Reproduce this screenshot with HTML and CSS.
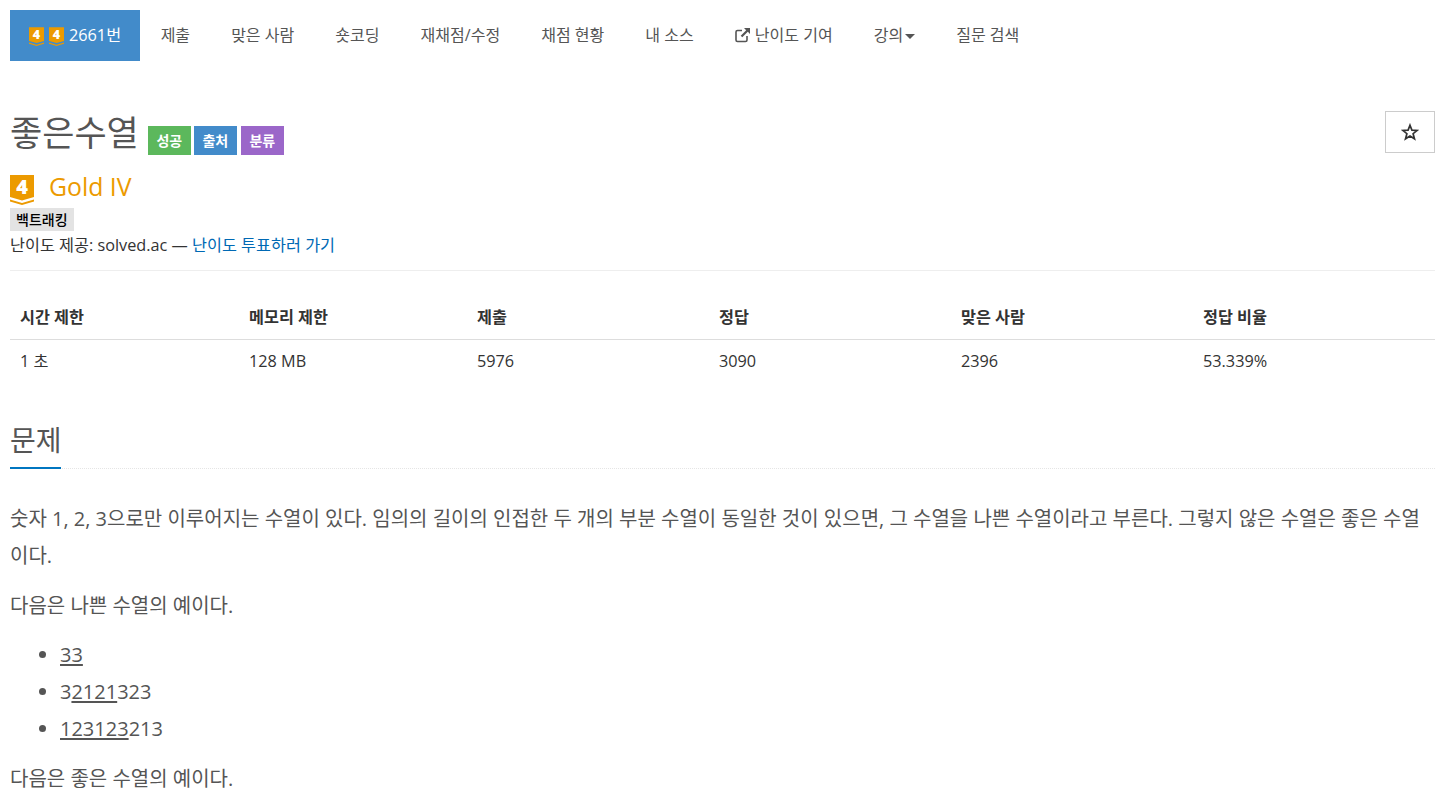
FILE: index.html
```html
<!DOCTYPE html>
<html lang="ko">
<head>
<meta charset="utf-8">
<title>좋은수열</title>
<link rel="stylesheet" href="styles.css">
</head>
<body>
<div class="page">
  <nav class="nav">
    <a class="nav-item active">
      <svg class="tier-small" viewBox="0 0 24 30"><path class="tier-fill" d="M0 0H24V22L12 25.500 0 22Z"/><path class="tier-fill" d="M0 24.500 12 28 24 24.500V26.500L12 30 0 26.500Z"/><text x="12" y="18.500" class="tier-num-big">4</text></svg>
      <svg class="tier-small" viewBox="0 0 24 30"><path class="tier-fill" d="M0 0H24V22L12 25.500 0 22Z"/><path class="tier-fill" d="M0 24.500 12 28 24 24.500V26.500L12 30 0 26.500Z"/><text x="12" y="18.500" class="tier-num-big">4</text></svg>
      <span>2661번</span>
    </a>
    <a class="nav-item">제출</a>
    <a class="nav-item">맞은 사람</a>
    <a class="nav-item">숏코딩</a>
    <a class="nav-item">재채점/수정</a>
    <a class="nav-item">채점 현황</a>
    <a class="nav-item">내 소스</a>
    <a class="nav-item"><svg class="ext-icon" viewBox="0 0 16 16"><path d="M12 9v4a1.500 1.500 0 0 1-1.500 1.500h-8A1.500 1.500 0 0 1 1 13V5a1.500 1.500 0 0 1 1.500-1.500H7" fill="none" stroke="currentColor" stroke-width="1.600"/><path d="M9 1h6v6l-2.200-2.200-5.500 5.500-1.600-1.600 5.500-5.500z" fill="currentColor"/></svg><span>난이도 기여</span></a>
    <a class="nav-item">강의<span class="caret"></span></a>
    <a class="nav-item">질문 검색</a>
  </nav>

  <header class="title-row">
    <div class="title-left">
      <h1 class="title">좋은수열</h1>
      <span class="label green">성공</span>
      <span class="label blue">출처</span>
      <span class="label purple">분류</span>
    </div>
    <button class="star-btn"><svg class="star" viewBox="0 0 18 18"><path d="M9 2.200 10.900 7.100 16.200 7.400 12.100 10.700 13.500 15.800 9 13 4.500 15.800 5.900 10.700 1.800 7.400 7.100 7.100Z" fill="none" stroke="#333" stroke-width="1.700"/></svg></button>
  </header>

  <div class="tier-row">
    <svg class="tier-big" viewBox="0 0 24 30"><path class="tier-fill" d="M0 0H24V22L12 25.500 0 22Z"/><path class="tier-fill" d="M0 24.500 12 28 24 24.500V26.500L12 30 0 26.500Z"/><text x="12" y="18.500" class="tier-num-big">4</text></svg>
    <span class="tier-name">Gold IV</span>
  </div>
  <div class="tag-row"><span class="tag">백트래킹</span></div>
  <p class="credit">난이도 제공: solved.ac — <a class="link">난이도 투표하러 가기</a></p>

  <table class="info">
    <thead>
      <tr><th class="c1">시간 제한</th><th class="c2">메모리 제한</th><th class="c3">제출</th><th class="c4">정답</th><th class="c5">맞은 사람</th><th class="c6">정답 비율</th></tr>
    </thead>
    <tbody>
      <tr><td>1 초</td><td>128 MB</td><td>5976</td><td>3090</td><td>2396</td><td>53.339%</td></tr>
    </tbody>
  </table>

  <section class="problem">
    <div class="headline"><h2>문제</h2></div>
    <p>숫자 1, 2, 3으로만 이루어지는 수열이 있다. 임의의 길이의 인접한 두 개의 부분 수열이 동일한 것이 있으면, 그 수열을 나쁜 수열이라고 부른다. 그렇지 않은 수열은 좋은 수열이다.</p>
    <p>다음은 나쁜 수열의 예이다.</p>
    <ul>
      <li><u>33</u></li>
      <li>3<u>2121</u>323</li>
      <li><u>123123</u>213</li>
    </ul>
    <p>다음은 좋은 수열의 예이다.</p>
  </section>
</div>
</body>
</html>
```
FILE: styles.css
```css
* { box-sizing: border-box; }
html, body { margin: 0; padding: 0; }
body {
  font-family: "Open Sans", "Noto Sans CJK KR", sans-serif;
  font-size: 16.250px;
  line-height: 20px;
  color: #333;
  background: #fff;
  overflow: hidden;
}
.page { width: 1445px; padding: 10px 10px 0; height: 795px; overflow: hidden; }

.nav { display: flex; height: 51px; }
.nav-item {
  display: flex; align-items: center;
  padding: 0 20.500px 2px;
  color: #555;
  font-size: 16.050px;
}
.nav-item.active {
  background: #428bca; color: #fff;
  padding: 0 19px 2px;
  font-size: 16.250px;
}
.tier-small { width: 15px; height: 19px; margin-right: 5px; margin-top: 4px; overflow: visible; }
.tier-fill { fill: #ec9a00; }
.tier-num-big { fill: #fff; font: 800 20px "Open Sans", sans-serif; text-anchor: middle; }
.ext-icon { width: 16px; height: 16px; margin-right: 4px; }
.caret {
  display: inline-block; width: 0; height: 0; margin-left: 2px; margin-top: 3px;
  border-top: 5px solid #555; border-left: 5.500px solid transparent; border-right: 5.500px solid transparent;
}

.title-row { display: flex; justify-content: space-between; align-items: flex-start; margin-top: 50px; height: 61px; width: 1425px; }
.title-left { display: flex; align-items: flex-start; height: 44px; }
.title { margin: 0 9px 0 0; font-size: 35px; font-weight: 400; line-height: 44px; color: #555; }
.label {
  height: 29px; width: 43px; margin-right: 3px; margin-top: 15px;
  display: flex; align-items: center; justify-content: center;
  color: #fff; font-size: 14px; font-weight: 700;
}
.green { background: #5cb85c; }
.blue { background: #428bca; }
.purple { background: #9b67c9; margin-left: 1px; }
.star-btn {
  width: 50px; height: 42px; background: #fff; border: 1px solid #ccc; padding: 0;
  display: flex; align-items: center; justify-content: center;
}
.star { width: 18px; height: 18px; }

.tier-row { display: flex; align-items: center; height: 30px; margin-top: 3px; }
.tier-big { width: 24px; height: 30px; overflow: visible; }
.tier-name { margin-left: 15px; padding-bottom: 8px; font-size: 24.800px; color: #ec9a00; }
.tag-row { height: 24px; margin-top: 3px; display: flex; align-items: flex-start; }
.tag { background: #e3e3e3; color: #000; padding: 0 6px; font-size: 14px; font-weight: 500; line-height: 23px; height: 23px; }
.credit { margin: -1px 0 0; height: 28px; line-height: 28px; }
.link { color: #0069b4; }

.info { width: 1425px; table-layout: fixed; border-collapse: collapse; border-top: 1px solid #eee; margin-top: 11px; }
.info th { height: 69px; padding: 24px 10px 0; text-align: left; font-weight: 700; color: #333; border-bottom: 1px solid #ddd; }
.info td { height: 42px; padding: 0 10px; color: #333; }
.c1 { width: 229px; } .c2 { width: 228px; } .c3 { width: 242px; } .c4 { width: 242px; } .c5 { width: 242px; } .c6 { width: 242px; }

.problem { width: 1425px; margin-top: 41px; }
.headline { border-bottom: 1px dotted #e5e5e5; height: 46px; }
.headline h2 {
  display: inline-block; margin: 0; height: 46px; width: 51px; white-space: nowrap;
  font-size: 28px; font-weight: 400; line-height: 34px; color: #555;
  border-bottom: 2px solid #0076c0;
}
.problem p { margin: 0 0 13px; font-size: 20px; line-height: 37px; color: #555; }
.problem p:first-of-type { margin-top: 31px; }
.problem ul { margin: -1px 0 13px; padding: 0 0 0 50px; font-size: 20px; line-height: 37px; color: #555; }
.problem u { text-decoration-thickness: 2px; text-underline-offset: 2px; }
```
